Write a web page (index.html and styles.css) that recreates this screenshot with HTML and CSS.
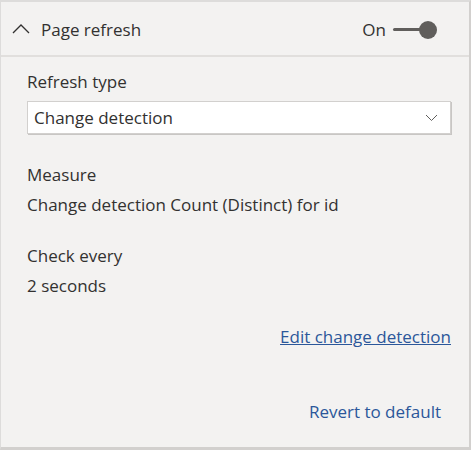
FILE: index.html
```html
<!DOCTYPE html>
<html>
<head>
<meta charset="utf-8">
<link rel="stylesheet" href="styles.css">
</head>
<body>
<div class="panel">
  <div class="header">
    <div class="title">
      <svg class="chev-up" width="18" height="11" viewBox="0 0 18 11"><path d="M1 10 L9 2 L17 10" fill="none" stroke="#323130" stroke-width="1.3"/></svg>
      <span>Page refresh</span>
    </div>
    <div class="toggle">
      <span>On</span>
      <span class="track"><span class="knob"></span></span>
    </div>
  </div>
  <div class="body">
    <div class="label">Refresh type</div>
    <div class="select">
      <span>Change detection</span>
      <svg width="13" height="8" viewBox="0 0 13 8"><path d="M1 1 L6.5 6.5 L12 1" fill="none" stroke="#605e5c" stroke-width="1"/></svg>
    </div>
    <div class="group first">
      <div class="label">Measure</div>
      <div class="value">Change detection Count (Distinct) for id</div>
    </div>
    <div class="group">
      <div class="label">Check every</div>
      <div class="value">2 seconds</div>
    </div>
    <div class="links">
      <a class="edit">Edit change detection</a>
      <a class="revert">Revert to default</a>
    </div>
  </div>
</div>
</body>
</html>
```
FILE: styles.css
```css
* { box-sizing: border-box; }
html, body { margin: 0; padding: 0; }
body {
  width: 471px;
  height: 450px;
  font-family: "Open Sans", "Noto Sans", sans-serif;
  font-size: 17px;
  color: #323130;
  background: #f3f2f1;
}
.panel {
  width: 471px;
  height: 450px;
  border-top: 2px solid #dddcdb;
  border-left: 1px solid #dddcdb;
  border-right: 2px solid #d2d0ce;
  border-bottom: 3px solid #d2d0ce;
  background: #f3f2f1;
  display: flex;
  flex-direction: column;
}
.header {
  height: 55px;
  border-bottom: 2px solid #e1dfdd;
  display: flex;
  align-items: center;
  justify-content: space-between;
  padding: 2px 40px 0 11px;
}
.title {
  display: flex;
  align-items: center;
  gap: 11px;
}
.chev-up { display: block; margin-top: -2px; }
.toggle {
  display: flex;
  align-items: center;
  gap: 7px;
}
.track {
  position: relative;
  width: 36px;
  height: 3px;
  background: #605e5c;
  border-radius: 2px;
}
.knob {
  position: absolute;
  right: -8px;
  top: -7.5px;
  width: 18px;
  height: 18px;
  border-radius: 50%;
  background: #605e5c;
}
.body {
  padding: 10px 18px 0 26px;
  display: flex;
  flex-direction: column;
}
.label, .value { line-height: 30px; }
.select {
  margin-top: 4px;
  height: 33px;
  background: #fff;
  border: 1px solid #d2d0ce;
  box-shadow: 1px 1px 0 #c8c6c4;
  display: flex;
  align-items: center;
  justify-content: space-between;
  padding: 0 12px 0 6px;
}
.group { margin-top: 21px; }
.group.first { margin-top: 26px; }
.links {
  display: flex;
  flex-direction: column;
  align-items: flex-end;
}
.links a {
  color: #2b579a;
  line-height: 30px;
}
.edit {
  margin-top: 21px;
  text-decoration: underline;
}
.revert {
  margin-top: 45px;
  margin-right: 10px;
}
```
